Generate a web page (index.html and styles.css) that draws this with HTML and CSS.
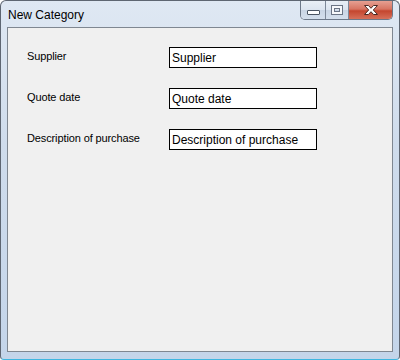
FILE: index.html
```html
<!DOCTYPE html>
<html>
<head>
	<title>New Category</title>
	<link rel="stylesheet" href="styles.css">
</head>
<body>
<div class="window">
	<div class="titlebar">
		<span class="title">New Category</span>
		<div class="caption-btns">
			<div class="cbtn min"><span class="min-glyph"></span></div>
			<div class="cbtn max"><span class="max-glyph"></span></div>
			<div class="cbtn close">
				<svg width="18" height="12" viewBox="0 0 18 12">
					<path d="M2.5 1.5 L6.5 1.5 L9 4.3 L11.5 1.5 L15.5 1.5 L11.3 6 L15.5 10.5 L11.5 10.5 L9 7.7 L6.5 10.5 L2.5 10.5 L6.7 6 Z" fill="#fff" stroke="#4a2a24" stroke-width="1" stroke-linejoin="round"/>
				</svg>
			</div>
		</div>
	</div>
	<div class="client">
		<form class="fields">
			<label class="lbl">Supplier</label>
			<input class="box" type="text" value="Supplier">
			<label class="lbl">Quote date</label>
			<input class="box" type="text" value="Quote date">
			<label class="lbl">Description of purchase</label>
			<input class="box" type="text" value="Description of purchase">
		</form>
	</div>
</div>
</body>
</html>
```
FILE: styles.css
```css
body{
	margin: 0;
	background: #fff;
}
/*窗口外框*/
.window{
	width: 400px;
	height: 360px;
	box-sizing: border-box;
	border: 1px solid #5e6672;
	border-bottom-color: #3fb6e0;
	border-radius: 6px 6px 4px 4px;
	background: linear-gradient(to bottom, #dfe8f3 0%, #cfdcec 40%, #c4d5ea 100%);
	padding: 0 6px 7px 6px;
	display: flex;
	flex-direction: column;
}
.titlebar{
	height: 26px;
	display: flex;
	align-items: flex-start;
}
.title{
	font-family: "Liberation Sans", Arial, sans-serif;
	font-size: 12px;
	color: #000;
	padding-left: 1px;
	padding-top: 7px;
	line-height: 14px;
}
/*右上角按钮*/
.caption-btns{
	margin-left: auto;
	display: flex;
	height: 18px;
	border: 1px solid #6c7888;
	border-top: none;
	border-radius: 0 0 5px 5px;
	overflow: hidden;
}
.cbtn{
	height: 18px;
	display: flex;
	align-items: center;
	justify-content: center;
}
.min, .max{
	background: linear-gradient(to bottom, #e9eff6 0%, #dbe4ef 50%, #c9d5e4 51%, #d4dfec 100%);
}
.min{
	width: 24px;
	border-right: 1px solid #7d8898;
}
.max{
	width: 22px;
	border-right: 1px solid #7d8898;
}
.close{
	width: 43px;
	background: linear-gradient(to bottom, #e6a092 0%, #d77462 45%, #c4462f 55%, #d6705a 100%);
}
.min-glyph{
	width: 11px;
	height: 3px;
	background: #fff;
	border: 1px solid #4b5563;
	border-radius: 1px;
	margin-top: 5px;
}
.max-glyph{
	width: 6px;
	height: 4px;
	border: 2px solid #f6f8fb;
	outline: 1px solid #6b7585;
	box-shadow: inset 0 0 0 1px #6b7585;
}
/*内容区域*/
.client{
	flex: 1;
	border: 1px solid #7f8791;
	background: #f0f0f0;
}
.fields{
	display: grid;
	grid-template-columns: 142px 148px;
	row-gap: 20px;
	padding: 19px 0 0 19px;
	margin: 0;
	align-items: start;
}
.lbl{
	font-family: "Liberation Sans", Arial, sans-serif;
	font-size: 11px;
	letter-spacing: -0.12px;
	line-height: 13px;
	color: #000;
	padding-top: 3px;
}
.box{
	box-sizing: border-box;
	width: 148px;
	height: 21px;
	margin: 0;
	border: 1px solid #000;
	background: #fff;
	padding: 0 2px;
	font-family: "Liberation Sans", Arial, sans-serif;
	font-size: 12px;
	color: #000;
	outline: none;
}
```
